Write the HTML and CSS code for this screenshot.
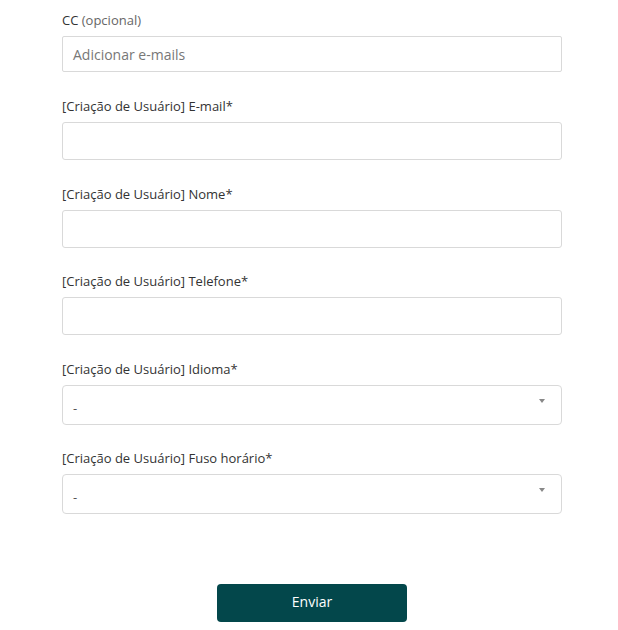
FILE: index.html
```html
<!DOCTYPE html>
<html lang="pt">
<head>
<meta charset="utf-8">
<link rel="stylesheet" href="styles.css">
</head>
<body>
<form class="form">
  <div class="field">
    <label class="label">CC <span class="opt">(opcional)</span></label>
    <div class="input input-cc"><span class="placeholder">Adicionar e-mails</span></div>
  </div>
  <div class="field">
    <label class="label">[Criação de Usuário] E-mail*</label>
    <div class="input"></div>
  </div>
  <div class="field field-tight">
    <label class="label">[Criação de Usuário] Nome*</label>
    <div class="input"></div>
  </div>
  <div class="field">
    <label class="label">[Criação de Usuário] Telefone*</label>
    <div class="input"></div>
  </div>
  <div class="field field-select">
    <label class="label">[Criação de Usuário] Idioma*</label>
    <div class="select"><span class="value">-</span><span class="arrow"></span></div>
  </div>
  <div class="field field-select">
    <label class="label">[Criação de Usuário] Fuso horário*</label>
    <div class="select"><span class="value">-</span><span class="arrow"></span></div>
  </div>
  <div class="actions">
    <button type="button" class="submit">Enviar</button>
  </div>
</form>
</body>
</html>
```

FILE: styles.css
```css
* { box-sizing: border-box; }
html, body { margin: 0; padding: 0; background: #fff; }
body {
  font-family: "Open Sans", "Liberation Sans", sans-serif;
  color: #333;
}
.form {
  width: 500px;
  margin-left: 62px;
  padding-top: 11px;
  display: flex;
  flex-direction: column;
}
.field {
  display: flex;
  flex-direction: column;
  margin-bottom: 25px;
}
.field-tight { margin-bottom: 24px; }
.field-select { margin-bottom: 24px; }
.label {
  font-size: 13px;
  line-height: 18px;
  color: #333;
  margin-bottom: 7px;
}
.opt { color: #666; }
.input {
  height: 38px;
  border: 1px solid #d9d9d9;
  border-radius: 3px;
  display: flex;
  align-items: center;
  padding: 0 10px;
}
.input-cc { height: 36px; border-radius: 2px; }
.placeholder {
  font-size: 14px;
  color: #777;
}
.select {
  height: 40px;
  border: 1px solid #d9d9d9;
  border-radius: 4px;
  display: flex;
  align-items: center;
  justify-content: space-between;
  padding: 6px 16px 0 10px;
  position: relative;
}
.value {
  font-size: 13px;
  color: #555;
}
.arrow {
  width: 0;
  height: 0;
  border-left: 3px solid transparent;
  border-right: 3px solid transparent;
  border-top: 4px solid #888;
  margin-top: -14px;
}
.actions {
  display: flex;
  justify-content: center;
  padding-top: 46px;
}
.submit {
  width: 190px;
  height: 38px;
  border: none;
  border-radius: 4px;
  background: #03474b;
  color: #fff;
  font-family: "Open Sans", "Liberation Sans", sans-serif;
  font-size: 14px;
  line-height: 36px;
  padding: 0 0 2px;
  cursor: pointer;
}
```
